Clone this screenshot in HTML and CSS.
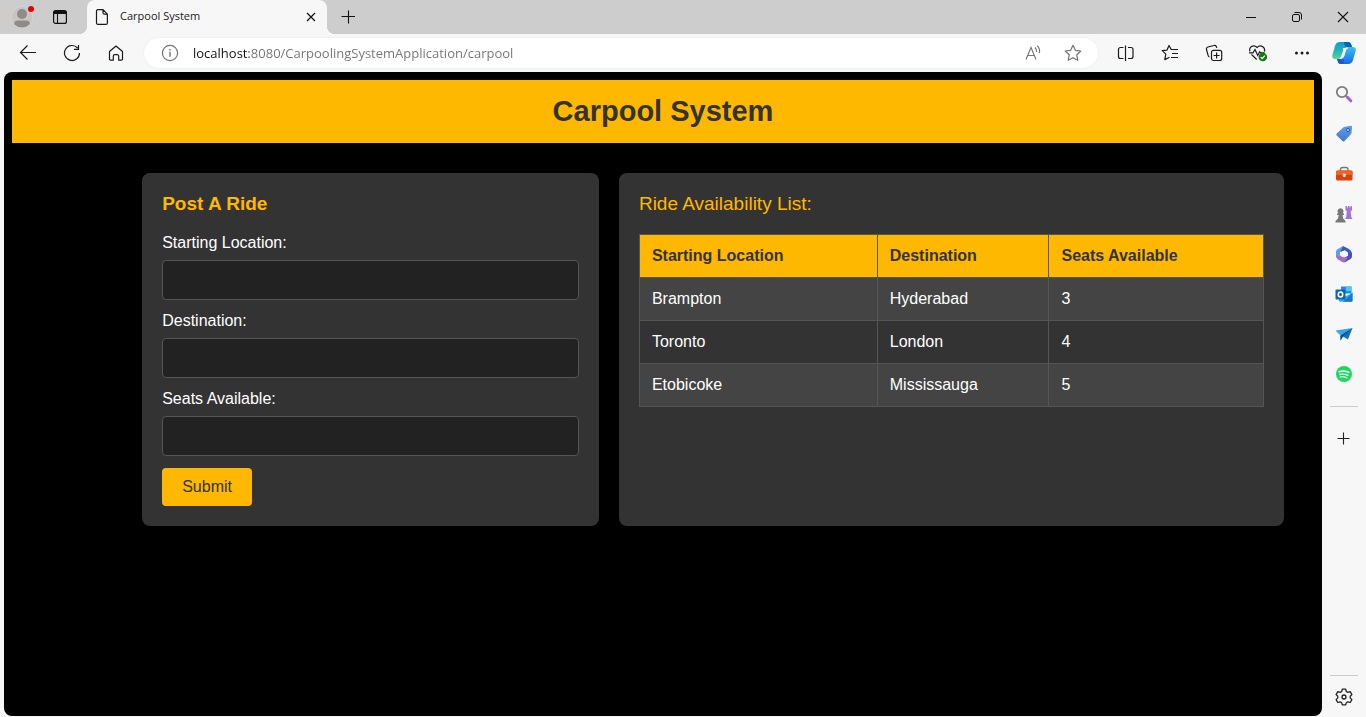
FILE: index.html
```html
<!DOCTYPE html>
<html lang="en">
<head>
<meta charset="utf-8">
<title>Carpool System</title>
<link rel="stylesheet" href="styles.css">
</head>
<body class="browser">
<header class="tabstrip">
  <button class="profile" aria-label="Profile">
    <svg width="28" height="28" viewBox="0 0 28 28"><defs><clipPath id="face"><circle cx="14" cy="14" r="10.5"/></clipPath></defs><circle cx="14" cy="14" r="10.8" fill="#c8c6c4" stroke="#d8d4d0"/><g clip-path="url(#face)" fill="#8f8b88"><circle cx="14" cy="11" r="5"/><path d="M6 21.5q0-4 4-4h8q4 0 4 4v4H6z"/></g><circle cx="23" cy="6" r="3" fill="#e3000f"/></svg>
  </button>
  <button class="tab-menu" aria-label="Tab actions">
    <svg width="16" height="16" viewBox="0 0 16 16"><rect x="1.6" y="1.6" width="12.8" height="12.8" rx="2" fill="none" stroke="#111" stroke-width="1.2"/><path d="M1.5 5V3.5a2 2 0 0 1 2-2h9a2 2 0 0 1 2 2V5z" fill="#111"/><path d="M5.5 5v9.4" stroke="#111" stroke-width="1.1"/></svg>
  </button>
  <div class="tab">
    <svg width="14" height="18" viewBox="0 0 14 18" fill="none" stroke="#1a1a1a" stroke-width="1.2"><path d="M3 1.6h5l4.4 4.6v8.7a1.5 1.5 0 0 1-1.5 1.5H3a1.5 1.5 0 0 1-1.500-1.500V3.100A1.500 1.500 0 0 1 3 1.600zM8 1.600v3.100a1.500 1.500 0 0 0 1.500 1.500h2.900"/></svg>
    <span class="tab-title">Carpool System</span>
    <button class="tab-close" aria-label="Close tab"><svg width="10" height="10" viewBox="0 0 10 10" stroke="#111" stroke-width="1.2"><path d="M1 1l8 8M9 1L1 9"/></svg></button>
  </div>
  <button class="new-tab" aria-label="New tab"><svg width="14" height="14" viewBox="0 0 14 14" stroke="#111" stroke-width="1.1"><path d="M7.500 .5v13M.5 6.500h13.500"/></svg></button>
  <div class="window-buttons">
    <button aria-label="Minimize"><svg width="12" height="12" viewBox="0 0 12 12" stroke="#111"><path d="M1 6.500h10"/></svg></button>
    <button aria-label="Restore"><svg width="12" height="12" viewBox="0 0 12 12" fill="none" stroke="#111"><rect x="1.500" y="3.500" width="7" height="7" rx="1.500"/><path d="M3.500 1.500H8a2.500 2.500 0 0 1 2.500 2.500v4.500"/></svg></button>
    <button aria-label="Close"><svg width="12" height="12" viewBox="0 0 12 12" stroke="#111" stroke-width="1.100"><path d="M1 1l10 10M11 1L1 11"/></svg></button>
  </div>
</header>

<nav class="toolbar">
  <button class="tool" aria-label="Back"><svg width="18" height="18" viewBox="0 0 18 18" fill="none" stroke="#1b1b1b" stroke-width="1.200"><path d="M17 8.500H1.500M8.500 1.500l-7 7 7 7"/></svg></button>
  <button class="tool" aria-label="Refresh"><svg width="18" height="18" viewBox="0 0 18 18" fill="none" stroke="#1b1b1b" stroke-width="1.200"><path d="M16.500 9A7.500 7.500 0 1 1 14.600 4M11 5.400h4.500V1"/></svg></button>
  <button class="tool" aria-label="Home"><svg width="18" height="18" viewBox="0 0 18 18" fill="none" stroke="#1b1b1b" stroke-width="1.200" stroke-linejoin="round"><path d="M2.500 7.500L9 2l6.500 5.500v7.700a1 1 0 0 1-1 1h-2.800v-4a1.500 1.500 0 0 0-1.500-1.500H7.800a1.500 1.500 0 0 0-1.500 1.500v4H3.500a1 1 0 0 1-1-1z"/></svg></button>
  <div class="address">
    <svg width="18" height="18" viewBox="0 0 18 18" fill="none" stroke="#737373" stroke-width="1.200"><circle cx="9" cy="9" r="7.600"/><path d="M9 7.800v5M9 5v1.500" stroke-width="1.400"/></svg>
    <input class="url" type="text" aria-label="Address" value="localhost:8080/CarpoolingSystemApplication/carpool">
    <button class="address-tool" aria-label="Read aloud"><svg width="18" height="18" viewBox="0 0 18 18" fill="none" stroke="#737373" stroke-width="1.100"><path d="M2 15.500L7 3.500l5 12M3.800 11.500h6.400M11 3.500q1.800 1.500 1.500 4.500M13 1.800q3.500 2.700 2.300 7.200"/></svg></button>
    <button class="address-tool" aria-label="Favorite"><svg width="18" height="18" viewBox="0 0 18 18" fill="none" stroke="#737373" stroke-width="1.200" stroke-linejoin="round"><path d="M9 1.300l2.400 5 5.400.7-4 3.800 1 5.500L9 13.700l-4.800 2.600 1-5.500-4-3.800 5.400-.7z"/></svg></button>
  </div>
  <button class="tool" aria-label="Split screen"><svg width="18" height="18" viewBox="0 0 18 18" fill="none" stroke="#1b1b1b" stroke-width="1.200"><path d="M6.500 3.500h-3a2 2 0 0 0-2 2v7a2 2 0 0 0 2 2h3M11 3.500h3a2 2 0 0 1 2 2v7a2 2 0 0 1-2 2h-3M8.500 1.500v15.500"/></svg></button>
  <button class="tool" aria-label="Favorites"><svg width="18" height="18" viewBox="0 0 18 18" fill="none" stroke="#1b1b1b" stroke-width="1.200" stroke-linejoin="round"><path d="M11 5.500h-.800L8 1.500 5.900 6.200l-4.600.5 3.500 3.500-1 5.400 4.700-2.400M10.500 5.500H17M11 9.500h6M10 13.500h7"/></svg></button>
  <button class="tool" aria-label="Collections"><svg width="18" height="18" viewBox="0 0 18 18" fill="none" stroke="#1b1b1b" stroke-width="1.200"><path d="M4.500 13A2.500 2.500 0 0 1 3 11L1.500 5.500a2 2 0 0 1 1.400-2.500l6-1.500a2 2 0 0 1 2.600 1.400l.3 1"/><rect x="6.500" y="6.300" width="10.200" height="10.200" rx="2"/><path d="M11.600 8.500v6M8.600 11.500h6"/></svg></button>
  <button class="tool" aria-label="Browser essentials"><svg width="20" height="18" viewBox="0 0 20 18" fill="none" stroke="#1b1b1b" stroke-width="1.200"><path d="M2 7.500C.5 3.500 5.500-.2 9 3.500c3.500-3.700 8.500 0 7.500 4M3.500 10.500l5.200 5M1 8.800h4l2-3.300 2.700 6 2-3.700 1 1h4"/><circle cx="14.800" cy="13" r="4.300" fill="#107c10" stroke="none"/><path d="M12.700 13.200l1.500 1.500 2.700-3" stroke="#fff"/></svg></button>
  <button class="tool" aria-label="Settings and more"><svg width="18" height="18" viewBox="0 0 18 18" fill="#1b1b1b"><circle cx="3.500" cy="9" r="1.500"/><circle cx="9" cy="9" r="1.500"/><circle cx="14.500" cy="9" r="1.500"/></svg></button>
  <button class="tool copilot" aria-label="Copilot"><svg width="24" height="24" viewBox="0 0 24 24"><defs><linearGradient id="cpA" x1="0" y1="0" x2="0" y2="1"><stop offset="0" stop-color="#0b9fd8"/><stop offset=".5" stop-color="#23b3b5"/><stop offset="1" stop-color="#53dd83"/></linearGradient><linearGradient id="cpB" x1="0" y1="0" x2="0" y2="1"><stop offset="0" stop-color="#35c2f2"/><stop offset="1" stop-color="#1768ee"/></linearGradient></defs><path d="M8 1h8q2.300 0 3 2l1 3h-4q-3 0-3.500 3l-2 6q-1 3-4 3H3q-3.300 0-2.600-4L3 5q1-4 5-4z" fill="url(#cpA)"/><path d="M12 1h4q2.300 0 3 2l1 3h-5q-2 0-2.500-2z" fill="#0a63bb"/><path d="M16 23H8.500q-2 0-2.500-2l-1-3h2.500q3 0 4-3l2-6q1-3 4-3H21q3.300 0 2.600 4L21 19q-1 4-5 4z" fill="url(#cpB)"/><path d="M12 23H8.500q-2 0-2.500-2l-1-3h5q1.500 0 2 2z" fill="#2057d8"/><path d="M11 7h5.500q-2 .7-2.500 2.500L12.300 15q-.8 2.500-3.300 2.700H7q1.800-.9 2.400-2.900l1.700-5.300q.5-1.500-.1-2.500z" fill="#fff"/></svg></button>
</nav>

<div class="workspace">
  <main class="page">
    <h1 class="banner">Carpool System</h1>
    <div class="content">
      <form class="card ride-form">
        <h3 class="card-title form-title">Post A Ride</h3>
        <label class="label" for="start">Starting Location:</label>
        <input class="field" id="start" type="text">
        <label class="label" for="destination">Destination:</label>
        <input class="field" id="destination" type="text">
        <label class="label" for="seats">Seats Available:</label>
        <input class="field" id="seats" type="text">
        <button class="submit" type="submit">Submit</button>
      </form>
      <section class="card ride-list">
        <h3 class="card-title">Ride Availability List:</h3>
        <table class="rides">
          <thead><tr><th>Starting Location</th><th>Destination</th><th>Seats Available</th></tr></thead>
          <tbody>
            <tr><td>Brampton</td><td>Hyderabad</td><td>3</td></tr>
            <tr><td>Toronto</td><td>London</td><td>4</td></tr>
            <tr><td>Etobicoke</td><td>Mississauga</td><td>5</td></tr>
          </tbody>
        </table>
      </section>
    </div>
  </main>

  <aside class="sidebar">
    <button class="side" aria-label="Search"><svg width="18" height="18" viewBox="0 0 18 18" fill="none"><circle cx="7" cy="7" r="5.200" stroke="#7b7b7b" stroke-width="1.800"/><path d="M10.800 10.800l2 2" stroke="#7b7b7b" stroke-width="1.800"/><path d="M12.300 12.300l3.500 3.500" stroke="#9667cf" stroke-width="3" stroke-linecap="round"/></svg></button>
    <button class="side" aria-label="Shopping"><svg width="18" height="18" viewBox="0 0 18 18"><defs><linearGradient id="tag" x1="0" y1="0" x2="0" y2="1"><stop offset="0" stop-color="#5ba0e8"/><stop offset="1" stop-color="#4673d4"/></linearGradient></defs><path d="M10 1.800l5.500-1q1.500-.2 1.500 1.300l-.5 5.600q0 1-.8 1.800l-6.200 6.500q-1 1-2 0L1.700 10.500q-1-1 0-2L8.200 2.600q.8-.7 1.800-.8z" fill="url(#tag)"/><circle cx="13" cy="5" r="1.500" fill="#cfe2ff" stroke="#244f9e"/></svg></button>
    <button class="side" aria-label="Tools"><svg width="18" height="18" viewBox="0 0 18 18"><path d="M5.500 6V4.500a2 2 0 0 1 2-2h3.500a2 2 0 0 1 2 2V6" fill="none" stroke="#777" stroke-width="1.400"/><rect x="1" y="5.500" width="16.500" height="10" rx="1.500" fill="#d8400e"/><path d="M1 7a1.500 1.500 0 0 1 1.500-1.500H16A1.500 1.500 0 0 1 17.500 7v3H1z" fill="#ed6324"/><rect x="7.700" y="8.500" width="3" height="3.500" rx="1" fill="#d9e2e5"/></svg></button>
    <button class="side" aria-label="Games"><svg width="18" height="18" viewBox="0 0 18 18"><path d="M10.500 1v4l1.300 1.500-.6 5.500-1.200 2h7.500l-1.200-2-.6-5.500L17 5V1h-1.500v1.500h-1V1h-1.500v1.500h-1V1z" fill="#a276d3"/><path d="M3 8a3 3 0 1 1 5 0l1 1v1H7.500l.7 3.500 2.300 2.500v1.500H.5V16L3 13.500l.7-3.500H2V9z" fill="#77787a"/></svg></button>
    <button class="side" aria-label="Microsoft 365"><svg width="18" height="18" viewBox="0 0 18 18"><path d="M8 1L2.500 4.200A3 3 0 0 0 1 7v5.500l4-1.500V6.500z" fill="#5ca1e8"/><path d="M8 1l5.500 2.700A6 6 0 0 1 17 8.500V11l-4-2.500L5 6.500z" fill="#385cb4"/><path d="M17 8v3.500a3 3 0 0 1-1.500 2.500L9.500 17.500l-1.500-5 5-2V6.500L9 4z" fill="#4a4fc0"/><path d="M1 11.500l4-1 3.500 2H13L9.700 17q-1 .8-2.400 0L2.300 14z" fill="#a869d1"/><path d="M6.500 6.500L10 5.200l3 2.300v3.200l-3.500 1.800L6 11z" fill="#f7f7f7"/></svg></button>
    <button class="side" aria-label="Outlook"><svg width="18" height="18" viewBox="0 0 18 18"><path d="M6 1.500h10.500v7H6z" fill="#1c8fe0"/><path d="M11 1.500h5.500V6H11z" fill="#4fc5f5"/><path d="M4 8l6.500 3.500L17.500 7.500v8a1.300 1.300 0 0 1-1.300 1.300H5.300A1.300 1.300 0 0 1 4 15.500z" fill="#2eaae9"/><path d="M17.500 8v7.500a1.300 1.300 0 0 1-1.300 1.300H8z" fill="#1878d0"/><rect x=".5" y="4.500" width="10" height="10" rx="1" fill="#1264b4"/><ellipse cx="5.500" cy="9.500" rx="2.200" ry="2.500" fill="none" stroke="#fff" stroke-width="1.500"/></svg></button>
    <button class="side" aria-label="Drop"><svg width="18" height="18" viewBox="0 0 18 18"><path d="M.5 5.500L17.500 3 5.500 10.500z" fill="#35a8e9"/><path d="M17.500 3L13 14.500l-5-3-2.500 4v-5z" fill="#1471bb"/><path d="M17.500 3L8 11.500l-2.500 4v-5z" fill="#0b508f"/></svg></button>
    <button class="side" aria-label="Spotify"><svg width="18" height="18" viewBox="0 0 18 18" fill="none" stroke="#fff" stroke-linecap="round"><circle cx="9" cy="9" r="8" fill="#1ed760" stroke="none"/><path d="M4.200 6.700q5-1.600 9.700.8" stroke-width="1.600"/><path d="M4.700 9.500q4.300-1.200 8.200.9" stroke-width="1.300"/><path d="M5.200 12q3.500-.9 6.700.8" stroke-width="1.100"/></svg></button>
    <hr class="divider">
    <button class="side" aria-label="Customize"><svg width="14" height="14" viewBox="0 0 14 14" stroke="#222" stroke-width="1.100"><path d="M6.500 .5v12M.5 6.500h12"/></svg></button>
    <hr class="divider bottom">
    <button class="side" aria-label="Settings"><svg width="20" height="20" viewBox="0 0 20 20" fill="none" stroke="#222" stroke-width="1.300" stroke-linejoin="round"><path d="M8.300 2.200h3.400l.6 2.300 1.500.9 2.400-.7 1.700 2.900-1.700 1.700v1.600l1.700 1.700-1.700 2.900-2.400-.7-1.500.9-.6 2.200H8.300l-.6-2.200-1.500-.9-2.400.7-1.700-2.900 1.700-1.700V9.300L2.100 7.600l1.700-2.900 2.400.7 1.500-.9z"/><circle cx="10" cy="10" r="2"/></svg></button>
  </aside>
</div>
</body>
</html>
```

FILE: styles.css
```css
* { box-sizing: border-box; }

.browser {
  display: flex;
  flex-direction: column;
  height: 100vh;
  margin: 0;
  overflow: hidden;
  background: #f7f7f7;
  font-family: "Open Sans", "Noto Sans", sans-serif;
}

button {
  display: flex;
  align-items: center;
  justify-content: center;
  padding: 0;
  border: 0;
  background: none;
}

/* Tab strip */
.tabstrip {
  display: flex;
  flex: none;
  height: 34px;
  background: #cdcdcd;
}
.profile { width: 44px; }
.tab-menu { width: 32px; }
.tab {
  position: relative;
  display: flex;
  align-items: center;
  gap: 11px;
  width: 240px;
  margin-left: 11px;
  padding: 0 8px;
  border-radius: 8px 8px 0 0;
  background: #f7f7f7;
}
.tab::before,
.tab::after {
  content: "";
  position: absolute;
  bottom: 0;
  width: 8px;
  height: 8px;
}
.tab::before {
  right: 100%;
  background: radial-gradient(circle at 0 0, #cdcdcd 8px, #f7f7f7 8px);
}
.tab::after {
  left: 100%;
  background: radial-gradient(circle at 100% 0, #cdcdcd 8px, #f7f7f7 8px);
}
.tab-title {
  flex: 1;
  padding-bottom: 2px;
  color: #1a1a1a;
  font-size: 11px;
  line-height: 16px;
}
.tab-close { width: 16px; height: 16px; }
.new-tab { width: 42px; }
.window-buttons { display: flex; margin-left: auto; }
.window-buttons button { width: 46px; }

/* Toolbar */
.toolbar {
  display: flex;
  flex: none;
  align-items: center;
  height: 38px;
  padding: 0 2px 0 6px;
}
.tool { flex: none; width: 44px; height: 30px; }
.copilot { width: 40px; }
.address {
  display: flex;
  flex: 1;
  align-items: center;
  height: 30px;
  margin: 0 6px;
  padding: 0 5px 0 17px;
  border-radius: 15px;
  background: #fff;
  box-shadow: 0 0 3px rgba(0, 0, 0, 0.06);
}
.url {
  flex: 1;
  min-width: 0;
  margin-left: 14px;
  padding: 0;
  border: 0;
  outline: 0;
  background: linear-gradient(to right, #111 56px, #737373 56px);
  background-clip: text;
  color: transparent;
  font-family: inherit;
  font-size: 13px;
  line-height: 20px;
}
.address-tool { width: 40px; height: 28px; }

/* Page and sidebar */
.workspace { display: flex; flex: 1; min-height: 0; }
.page {
  flex: 1;
  margin: 0 0 1px 4px;
  padding: 8px;
  border-radius: 8px;
  overflow: auto;
  background: #000;
  color: #fff;
  font-family: "Liberation Sans", Arial, sans-serif;
  font-size: 16px;
}
.banner {
  margin: 0;
  padding: 15px;
  background: #ffb800;
  color: #333;
  font-size: 29px;
  line-height: 33px;
  text-align: center;
}
.content {
  display: flex;
  gap: 20px;
  margin: 30px 30px 0 10%;
}
.card {
  padding: 20px;
  border-radius: 8px;
  background: #333;
}
.ride-form { flex: 0 0 40%; }
.ride-list { flex: 1; }
.card-title {
  margin: 0 0 20px;
  color: #ffb800;
  font-size: 19px;
  font-weight: 400;
  line-height: 21px;
}
.form-title { font-weight: 700; }
.label { display: block; line-height: 18px; }
.field {
  display: block;
  width: 100%;
  height: 40px;
  margin: 8px 0 12px;
  padding: 10px;
  border: 1px solid #555;
  border-radius: 4px;
  background: #222;
  color: #fff;
  font: inherit;
}
.label + .field:not(:last-of-type) { margin-bottom: 12px; }
.submit {
  padding: 10px 20px;
  border-radius: 4px;
  background: #ffb800;
  color: #333;
  font: inherit;
  line-height: 18px;
}
.rides {
  width: 100%;
  border-collapse: collapse;
  line-height: 18px;
  text-align: left;
}
.rides th,
.rides td {
  padding: 12px;
  border: 1px solid #555;
}
.rides th { background: #ffb800; color: #333; }
.rides tbody tr:nth-child(odd) { background: #444; }

.sidebar {
  display: flex;
  flex: none;
  flex-direction: column;
  align-items: center;
  width: 44px;
  padding-top: 2px;
}
.side { flex: none; width: 40px; height: 40px; }
.divider {
  flex: none;
  width: 28px;
  height: 1px;
  margin: 12px 0;
  border: 0;
  background: #ccc;
}
.bottom { margin: auto 0 1px; }
```
